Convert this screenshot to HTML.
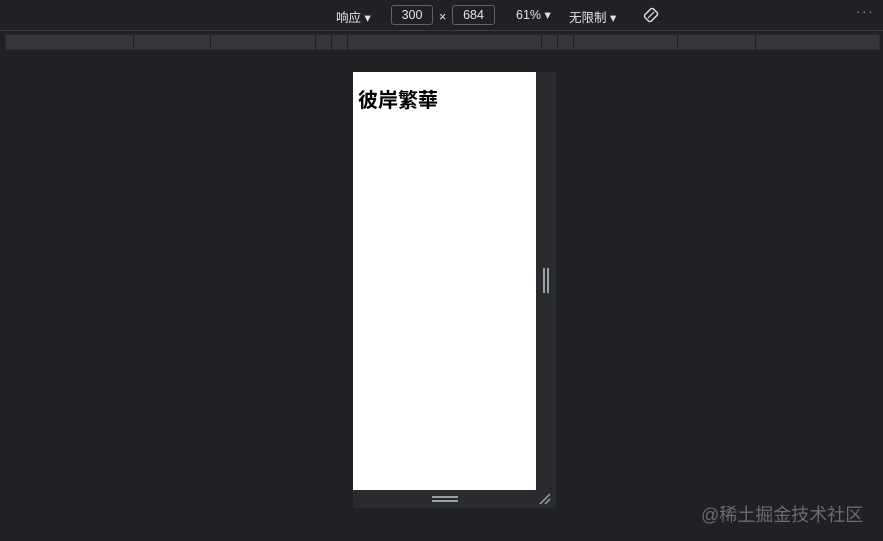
<!DOCTYPE html>
<html><head><meta charset="utf-8"><style>
*{margin:0;padding:0;box-sizing:border-box}
body{width:883px;height:541px;background:#202124;position:relative;overflow:hidden;font-family:"Liberation Sans","Noto Sans CJK SC",sans-serif;color:#e8eaed}
.tb{position:absolute;left:0;top:0;width:883px;height:31px;background:#202124;border-bottom:1px solid #3c3c3e}
.t{position:absolute;top:7px;font-size:12.5px;color:#e3e3e3}
.inp{position:absolute;top:5px;height:20px;border:1px solid #5f6368;border-radius:3px;font-size:12.5px;text-align:center;line-height:18px;color:#e3e3e3;background:#202124}
.ruler{position:absolute;left:5px;top:34px;width:875px;height:16px;background:#35363a;border:1px solid #2a2b2e}
.ruler i{position:absolute;top:0;width:1px;height:15px;background:#1e1f21}
.frame{position:absolute;left:353px;top:72px;width:203px;height:436px;background:#2a2b2e}
.page{position:absolute;left:353px;top:72px;width:183px;height:418px;background:#fff}
h1{position:absolute;left:5px;top:12px;font-size:20px;font-weight:bold;color:#000;font-family:"Liberation Sans","Noto Sans CJK TC",sans-serif;white-space:nowrap}
</style></head><body>
<div class="tb">
<span class="t" style="left:336px">响应 ▾</span>
<div class="inp" style="left:391px;width:42px">300</div>
<span class="t" style="left:439px;top:10px">×</span>
<div class="inp" style="left:452px;width:43px">684</div>
<span class="t" style="left:516px">61% ▾</span>
<span class="t" style="left:569px">无限制 ▾</span>
<svg style="position:absolute;left:643px;top:7px" width="16" height="16" viewBox="0 0 16 16"><rect x="3.5" y="2" width="9" height="12" rx="2" transform="rotate(45 8 8)" fill="none" stroke="#e3e3e3" stroke-width="1.4"/><line x1="5" y1="11" x2="11" y2="5" stroke="#e3e3e3" stroke-width="1.2"/></svg>
<span class="t" style="left:856px;top:5px;color:#9aa0a6;letter-spacing:2px">···</span>
</div>
<div class="ruler">
<i style="left:127px"></i><i style="left:204px"></i><i style="left:309px"></i><i style="left:325px"></i><i style="left:341px"></i><i style="left:535px"></i><i style="left:551px"></i><i style="left:567px"></i><i style="left:671px"></i><i style="left:749px"></i>
</div>
<div class="frame"></div>
<div class="page"><h1>彼岸繁華</h1></div>
<div style="position:absolute;left:543px;top:268px;width:2px;height:25px;background:#9aa0a6"></div>
<div style="position:absolute;left:547px;top:268px;width:2px;height:25px;background:#9aa0a6"></div>
<div style="position:absolute;left:432px;top:496px;width:26px;height:2px;background:#9aa0a6"></div>
<div style="position:absolute;left:432px;top:500px;width:26px;height:2px;background:#9aa0a6"></div>
<svg style="position:absolute;left:538px;top:492px" width="14" height="14" viewBox="0 0 14 14"><line x1="2" y1="12" x2="12" y2="2" stroke="#9aa0a6" stroke-width="1.5"/><line x1="7" y1="12" x2="12" y2="7" stroke="#9aa0a6" stroke-width="1.5"/></svg>
<div style="position:absolute;left:701px;top:501px;font-size:18px;color:#6b6c6e;white-space:nowrap">@稀土掘金技术社区</div>
</body></html>
